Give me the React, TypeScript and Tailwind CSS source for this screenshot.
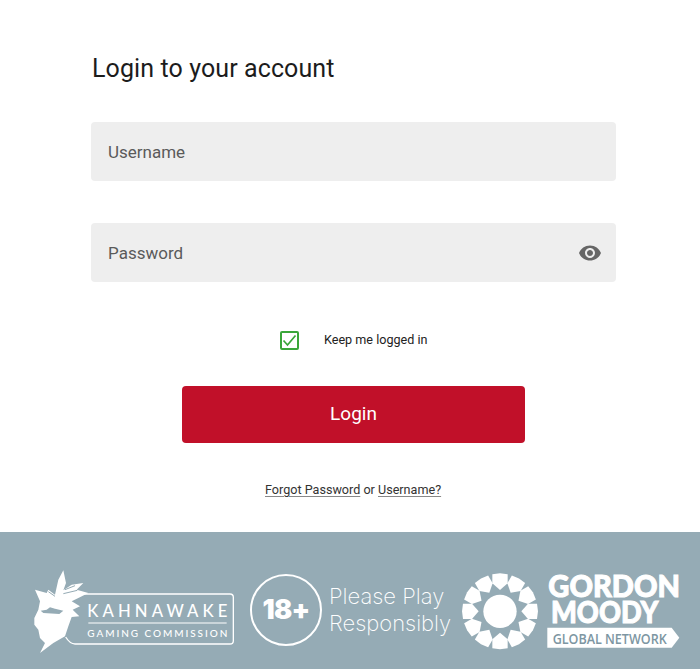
import React from "react";

const FOOTER_BG = "#95abb5";

const PETALS = [0, 30, 60, 90, 120, 150, 180, 210, 240, 270, 300, 330];

function KahnawakeLogo() {
  return (
    <svg width="202" height="90" viewBox="102 115 606 270" className="shrink-0">
      <path
        d="M240 193H690a10 10 0 0 1 10 10V333a10 10 0 0 1-10 10H225Q210 343 197 322"
        fill="none"
        stroke="white"
        strokeWidth="4"
      />
      <path
        fill="white"
        d="M120 370L135 340L120 325L115 300L103 285L103 265L115 240L120 215L105 180L140 190L145 180L165 195L175 150L190 122L198 160L190 182L215 165L250 160L230 180L265 190L235 205L215 215L240 230L218 240L238 260L215 262L205 290L195 320L160 340Z"
      />
      <path fill={FOOTER_BG} d="M122 243L140 240L150 233L165 237L190 243L178 253L130 250Z" />
      <path stroke={FOOTER_BG} strokeWidth="3" fill="none" d="M145 186L165 200M195 180L225 168M190 192L232 182" />
      <text
        x="262"
        y="262"
        fill="white"
        fontSize="50"
        textLength="420"
        fontFamily="Lato, sans-serif"
        fontWeight="500"
      >
        KAHNAWAKE
      </text>
      <path d="M265 280H680" stroke="white" strokeWidth="3" />
      <text
        x="262"
        y="322"
        fill="white"
        fontSize="30"
        textLength="420"
        fontFamily="Lato, sans-serif"
        fontWeight="500"
      >
        GAMING COMMISSION
      </text>
    </svg>
  );
}

function GordonMoodyLogo() {
  return (
    <svg width="222" height="80" viewBox="36 125 666 240" className="shrink-0 overflow-visible">
      <g transform="translate(150 243)" fill="white">
        <circle r="50" />
        {PETALS.map((angle) => (
          <polygon
            key={angle}
            transform={`rotate(${angle})`}
            points="-23,-111 0,-114 23,-111 23,-84 0,-64 -23,-84"
          />
        ))}
      </g>
      <text
        x="295"
        y="200"
        fill="white"
        stroke="white"
        strokeWidth="3"
        fontSize="90"
        fontWeight="900"
        fontFamily="Lato, sans-serif"
        textLength="395"
        lengthAdjust="spacingAndGlyphs"
      >
        GORDON
      </text>
      <text
        x="303"
        y="278"
        fill="white"
        stroke="white"
        strokeWidth="3"
        fontSize="90"
        fontWeight="900"
        fontFamily="Lato, sans-serif"
        textLength="322"
        lengthAdjust="spacingAndGlyphs"
      >
        MOODY
      </text>
      <polygon points="292,292 665,292 688,322 665,352 292,352" fill="white" />
      <text
        x="308"
        y="340"
        fill="#7d96a2"
        fontSize="45"
        fontWeight="600"
        fontFamily="'Open Sans', sans-serif"
        textLength="342"
        lengthAdjust="spacingAndGlyphs"
      >
        GLOBAL NETWORK
      </text>
    </svg>
  );
}

export default function App() {
  return (
    <div className="flex h-[669px] w-[700px] flex-col overflow-hidden bg-white font-['Roboto',sans-serif]">
      <main className="flex h-[532px] shrink-0 flex-col pl-[91px] pr-[84px] pt-[54px]">
        <h1 className="pl-px text-[25px] leading-[30px] tracking-[0.1px] text-[#1c1c1c]">Login to your account</h1>

        <input
          type="text"
          placeholder="Username"
          className="mt-[38px] h-[59px] w-full rounded bg-[#eeeeee] px-[17px] text-[17px] outline-none placeholder:text-[#5a5a5a]"
        />

        <div className="relative mt-[42px]">
          <input
            type="password"
            placeholder="Password"
            className="h-[59px] w-full rounded bg-[#eeeeee] px-[17px] text-[17px] outline-none placeholder:text-[#5a5a5a]"
          />
          <button className="absolute right-[14px] top-[18px] text-[#666666]" aria-label="Show password">
            <svg width="24" height="24" viewBox="0 0 24 24" fill="currentColor">
              <path d="M12 4.5C7 4.5 2.73 7.61 1 12c1.73 4.39 6 7.5 11 7.5s9.27-3.11 11-7.5c-1.73-4.39-6-7.5-11-7.5zM12 17c-2.76 0-5-2.24-5-5s2.24-5 5-5 5 2.24 5 5-2.24 5-5 5zm0-8c-1.66 0-3 1.34-3 3s1.34 3 3 3 3-1.34 3-3-1.34-3-3-3z" />
            </svg>
          </button>
        </div>

        <label className="mt-[49px] flex h-[19px] items-center pl-[189px]">
          <span className="flex h-[19px] w-[19px] items-center justify-center rounded-[2px] border-2 border-[#3aa63a]">
            <svg width="15" height="15" viewBox="0 0 15 15" fill="none" stroke="#3aa63a" strokeWidth="1.7">
              <path d="M1.5 7.5L5.5 12L13.5 2.5" />
            </svg>
          </span>
          <span className="ml-[25px] text-[12.6px] text-[#222222]">Keep me logged in</span>
        </label>

        <button className="mt-[36px] ml-[91px] h-[57px] w-[343px] rounded bg-[#c11029] text-[19px] text-white">
          Login
        </button>

        <p className="mt-[38px] ml-[174px] text-[12.6px] leading-[18px] text-[#333333]">
          <a href="#" className="underline decoration-[#888888] underline-offset-2">Forgot Password</a>
          <span> or </span>
          <a href="#" className="underline decoration-[#888888] underline-offset-2">Username?</a>
        </p>
      </main>

      <footer className="flex flex-1 items-start bg-[#95abb5] pl-[34px] pt-[36px]">
        <KahnawakeLogo />
        <div className="ml-[14px] mt-[6px] flex h-[72px] w-[72px] shrink-0 items-center justify-center rounded-full border-2 border-white">
          <span className="font-['Inter',sans-serif] text-[27px] font-black tracking-tight text-white">18+</span>
        </div>
        <div className="ml-[7px] mt-[15px] w-[125px] whitespace-nowrap font-['Inter',sans-serif] text-[22px] font-extralight leading-[27px] text-white">
          <div>Please Play</div>
          <div>Responsibly</div>
        </div>
        <div className="ml-[8px] mt-[4px]">
          <GordonMoodyLogo />
        </div>
      </footer>
    </div>
  );
}
